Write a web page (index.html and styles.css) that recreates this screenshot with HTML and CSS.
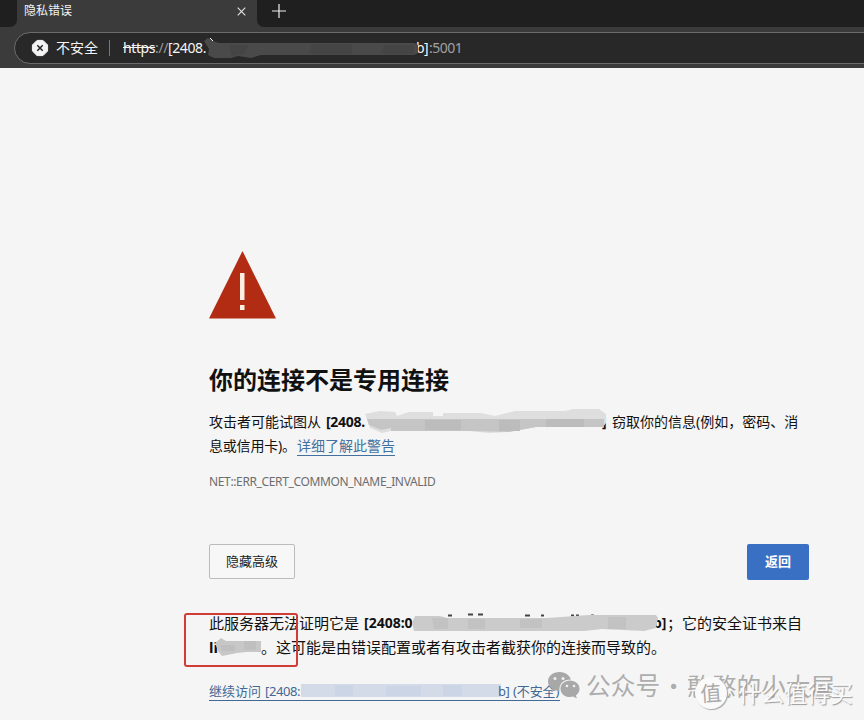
FILE: index.html
```html
<!DOCTYPE html>
<html lang="zh-CN">
<head>
<meta charset="utf-8">
<title>隐私错误</title>
<link rel="stylesheet" href="styles.css">
</head>
<body>
<header class="browser">
  <div class="tabs">
    <div class="tab-edge"></div>
    <div class="tab"><span>隐私错误</span>
      <svg width="9" height="9" viewBox="0 0 9 9"><path d="M.7.7l7.6 7.6M8.3.7L.7 8.3" stroke="#ddd" stroke-width="1.2"/></svg>
    </div>
    <div class="new-tab"><svg width="14" height="14" viewBox="0 0 14 14"><path d="M7 0v14M0 7h14" stroke="#eee" stroke-width="1.2"/></svg></div>
  </div>
  <div class="address">
    <svg width="16" height="16" viewBox="0 0 16 16"><path d="M5 .4h6L15.600 5v6L11 15.600H5L.4 11V5z" fill="#f4f4f4" stroke="#f4f4f4" stroke-linejoin="round"/><path d="M5.300 5.300l5.400 5.400m0-5.400l-5.400 5.400" stroke="#282828" stroke-width="1.600"/></svg>
    <span class="unsafe">不安全</span><i class="divider"></i>
    <span class="scheme"><s>https</s><em>://</em></span><span class="host">[2408.</span>
    <svg class="host-mask" width="222" height="22" viewBox="0 0 222 22"><path d="M0 4l4-3 5 3 6 2h195l4 2v8l-4 2H57l-10 3-13-2-7 2H10l-6-3 1-6z" fill="#4a4a4a"/><path d="M25 8h20l-5 9-12 2zM108 7h40v10h-43zM180 8h30v9h-33z" fill="#454545"/><path d="M6 1l3 3" stroke="#fff"/></svg>
    <span class="host-end">b]</span><span class="port">:5001</span>
  </div>
</header>
<main>
  <svg class="warning" width="68" height="68" viewBox="0 0 68 68"><path d="M33.500 0L67 67.500H0z" fill="#b12c13"/><path d="M31 22h4.500v27H31zM31 54h4.500v5H31z" fill="#ffeee3"/></svg>
  <h1>你的连接不是专用连接</h1>
  <div class="summary">
    <div class="row"><span class="cell-from">攻击者可能试图从</span><b class="cell-ip">[2408.</b>
      <svg class="mask-one" width="243" height="24" viewBox="0 0 243 24"><path d="M0 5l15-3 15 1 2 4 12-4h24v4h10V4h38l14 3 20-5h50l8-2h26l7 5v9l-3 4h-67l-27 5-20 1-20-2H26l-9 2-12-5z" fill="#dedede"/><path d="M2 10h237v8H171l-27 5-38-1H26v-3l-10 2-12-5z" fill="#c5c5c5"/><path d="M60 11h36v10H60zM134 11h21v11h-21zM181 10h38v8h-38z" fill="#bcbcbc"/></svg>
      <b class="cell-end">]</b><span class="steal">窃取你的信息(例如，密码、消</span></div>
    <div class="row"><span class="card">息或信用卡)。</span><a href="#" class="learn">详细了解此警告</a></div>
  </div>
  <p class="code">NET::ERR_CERT_COMMON_NAME_INVALID</p>
  <div class="actions"><button class="secondary">隐藏高级</button><button class="primary">返回</button></div>
  <div class="details">
    <div class="row"><span class="cell-proof">此服务器无法证明它是</span><b class="cell-ip2">[2408:0</b>
      <svg class="mask-two" width="242" height="18" viewBox="0 0 242 18"><path d="M34 2.500h4m16-1h5m5 0h5m42 1h5m11 0h3m27 0h3m2 0h3m12 0h3" stroke="#444" stroke-width="2"/><path d="M1 3h25l7 2h100l42-3h67l2 3-2 10-12 3-42-2-18 2H0l-2-8z" fill="#cbcbcb"/><path d="M18 5h16v11H20zM54 6h17v10H54zM106 6h22v9h-22zM194 4h18v12h-18z" fill="#c2c2c2"/></svg>
      <b class="cell-end2">b]</b><span>；它的安全证书来自</span></div>
    <div class="row"><b class="cell-li">li</b><svg class="mask-name" width="46" height="19" viewBox="0 0 46 19"><path d="M0 6l6-5 5 3h35v11H31l-9 1-15 3-4-5z" fill="#c7c7c7"/><path d="M5 8h15v6H7zM29 4h12v9H29z" fill="#bfbfbf"/></svg><span>。这可能是由错误配置或者有攻击者截获你的连接而导致的。</span></div>
  </div>
  <a class="proceed" href="#"><span class="cell-go">继续访问</span><span class="cell-ip3">[2408:</span><svg width="200" height="13" viewBox="0 0 200 13"><path d="M0 0h200v13H0z" fill="#d3dbe9"/><path d="M34 1h18v11H34zM85 2h35v10H85zM142 1h19v11h-19z" fill="#ccd5e6"/></svg><span class="cell-end3">b]</span><span class="insecure">(不安全)</span></a>
</main>
<div class="highlight"></div>
<div class="mark-account">
  <svg width="32" height="28" viewBox="0 0 32 28"><path d="M11.500 1C5 1 0 5 0 10.500c0 3.300 1.700 5.800 4.300 7.500L3 21.500l4.400-2.200 4 .6C11 13 15 8.500 23 8.500 21.500 4 17 1 11.500 1z" fill="#a8a8a8"/><path d="M22 9.500c-5.500 0-9.500 3.600-9.500 8.300s4 8.300 9.500 8.300l3.200-.5 3.700 2-1-3.100c2.300-1.600 3.600-3.900 3.600-6.700 0-4.700-4-8.300-9.500-8.300z" fill="#a8a8a8"/><g fill="#f0f0f0"><circle cx="7" cy="7.500" r="1.500"/><circle cx="15" cy="7.500" r="1.500"/><circle cx="19" cy="15" r="1.300"/><circle cx="26" cy="15" r="1.300"/></g></svg>
  <span class="account">公众号</span><span class="dot">·</span><span>憨憨的小大屋</span>
</div>
<div class="mark-site"><span class="badge">值</span><span class="site">什么值得买</span></div>
</body>
</html>
```

FILE: styles.css
```css
* { box-sizing: border-box; }
body { margin: 0; width: 864px; height: 720px; overflow: hidden; position: relative; background: #f5f5f5; color: #111; font-family: "Noto Sans", "Noto Sans CJK SC", sans-serif; }
svg { display: block; flex: none; overflow: visible; }
b, span { flex: none; white-space: nowrap; }
.browser { height: 68px; background: #3b3b3b; }
.tabs { height: 27px; display: flex; background: #3b3b3b; }
.tab-edge { width: 17px; background: #1f1f1f; border-bottom-right-radius: 7px; }
.tab { width: 240px; display: flex; justify-content: space-between; align-items: center; padding: 0 11px 4px 7px; color: #f2f2f2; font: 12px/20px "Noto Sans CJK SC", sans-serif; }
.tab span { margin-top: -3px; }
.new-tab { flex: 1; background: #1f1f1f; border-bottom-left-radius: 7px; padding: 4px 0 0 15px; }
.address { display: flex; align-items: center; height: 32px; margin: 5px 0 0 14px; padding-left: 17px; width: 880px; border: 1px solid #6b6b6b; border-radius: 16px; background: #282828; color: #f5f5f5; font-size: 14px; }
.unsafe { width: 42px; margin: -2px 0 0 8px; font-family: "Noto Sans CJK SC", sans-serif; }
.divider { width: 1px; height: 16px; background: #777; margin: 0 13px 0 11px; }
.scheme { width: 45px; letter-spacing: -.4px; margin-top: -1px; }
.scheme em { font-style: normal; color: #999; }
.host { width: 36px; letter-spacing: -.4px; margin-top: -1px; }
.host-mask { z-index: 1; }
.host-end { width: 13px; margin: -1px 0 0 -10px; letter-spacing: -.5px; }
.port { color: #a0a0a0; letter-spacing: -.5px; margin-top: -1px; }
main { padding: 183px 0 0 209px; width: 809px; }
h1 { margin: 42px 0 0; height: 36px; font: 700 24px/36px "Noto Sans CJK SC", sans-serif; }
.row { display: flex; align-items: center; height: 24.5px; }
.summary { margin-top: 12px; font-size: 14px; }
.cell-from { width: 117px; }
.cell-ip { width: 39px; letter-spacing: -.3px; }
.mask-one { z-index: 1; }
.cell-end { width: 6px; margin-left: -6px; margin-right: 4px; }
.steal { letter-spacing: 0; }
.card { width: 88px; margin-top: -2px; letter-spacing: -.2px; }
.learn { width: 98px; height: 20px; line-height: 19px; color: #43719f; text-decoration: none; border-bottom: 1px solid #43719f; }
.code { width: 226px; margin: 14px 0 0; height: 20px; font-size: 12px; line-height: 20px; letter-spacing: -.36px; color: #6d6d6d; }
.actions { margin-top: 52px; display: flex; justify-content: space-between; width: 600px; height: 36px; }
button { font: 13px/20px "Noto Sans CJK SC", sans-serif; padding: 0 0 1px; }
.secondary { width: 86px; height: 35px; border: 1px solid #bbb; border-radius: 2px; background: #f7f7f7; color: #222; }
.primary { width: 62px; border: 0; border-radius: 2px; background: #3a70c4; color: #fff; font-weight: 700; padding-bottom: 2px; }
.details { margin-top: 30px; font-size: 15px; }
.cell-proof { width: 155px; }
.cell-ip2 { width: 52px; font-size: 14px; letter-spacing: 0; }
.mask-two { margin-left: -2px; z-index: 1; }
.cell-end2 { width: 14px; margin-left: -3px; font-size: 14px; }
.cell-li { width: 6px; }
.mask-name { z-index: 1; }
.proceed { display: flex; align-items: center; width: 351px; height: 20px; margin-top: 22px; color: #426894; border-bottom: 1px solid #426894; text-decoration: none; font-size: 13px; line-height: 18px; }
.cell-go { width: 56px; }
.cell-ip3 { width: 36px; letter-spacing: -.4px; }
.cell-end3 { width: 12px; margin-left: -3px; margin-right: 3px; letter-spacing: -.4px; }
.insecure { letter-spacing: -.1px; }
.highlight { position: absolute; left: 184px; top: 613px; width: 114px; height: 54px; border: 2px solid #d03c38; border-radius: 3px; }
.mark-account { position: absolute; left: 548px; top: 669px; display: flex; align-items: center; height: 32px; color: #999c; font: 24.7px/32px "Noto Sans CJK SC", sans-serif; }
.account { margin: -2px 0 0 6px; }
.dot { width: 27px; text-align: center; }
.mark-site { position: absolute; left: 695px; top: 676px; display: flex; align-items: center; height: 34px; color: #fafafa; font: 23px/34px "Noto Sans CJK SC", sans-serif; text-shadow: 1px 1px 1px #999; }
.badge { width: 32px; height: 32px; border-radius: 50%; background: #fafafa; color: #aaa; text-align: center; line-height: 30px; font-size: 21px; box-shadow: 1px 1px 1px #aaa; text-shadow: none; transform: rotate(-4deg); }
.site { margin: -3px 0 0 11px; }
```
